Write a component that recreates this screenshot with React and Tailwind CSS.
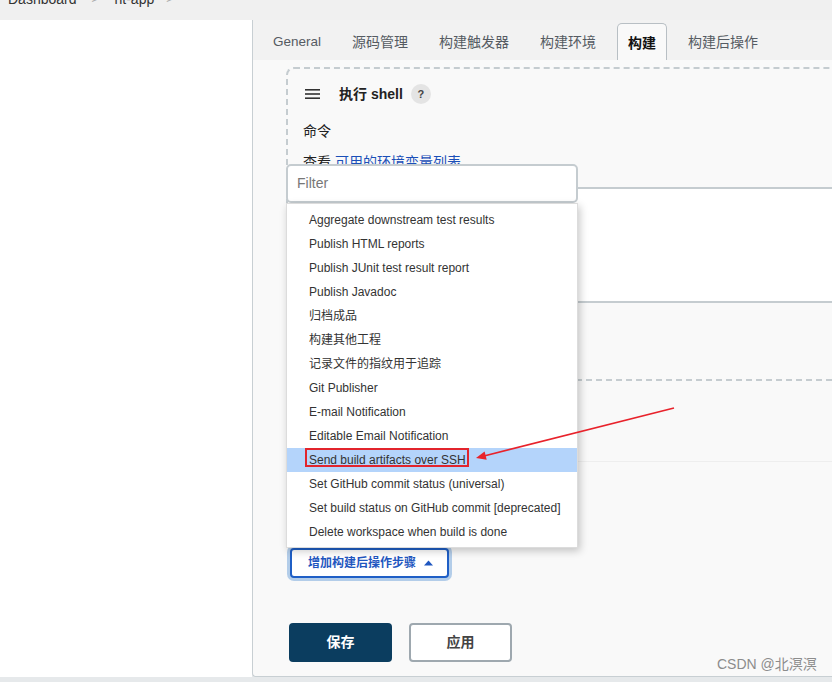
import React from 'react';

const font = "font-['Liberation_Sans','Noto_Sans_CJK_SC',sans-serif]";

const tabs = ['General', '源码管理', '构建触发器', '构建环境', '构建', '构建后操作'];

const items = [
  'Aggregate downstream test results',
  'Publish HTML reports',
  'Publish JUnit test result report',
  'Publish Javadoc',
  '归档成品',
  '构建其他工程',
  '记录文件的指纹用于追踪',
  'Git Publisher',
  'E-mail Notification',
  'Editable Email Notification',
  'Send build artifacts over SSH',
  'Set GitHub commit status (universal)',
  'Set build status on GitHub commit [deprecated]',
  'Delete workspace when build is done',
];

const App = () => {
  return (
    <div className={`relative w-[832px] h-[682px] overflow-hidden bg-[#e6e9eb] ${font}`}>
      {/* breadcrumb */}
      <div className="h-[20px] bg-[#f0f0f0] overflow-hidden">
        <div className="flex items-center h-[20px] -mt-[11px] pl-[8px] text-[14px] text-[#333]">
          <span>Dashboard</span>
          <span className="ml-[15px] text-[#aaa] text-[12px]">&gt;</span>
          <span className="ml-[16px]">rit-app</span>
          <span className="ml-[12px] text-[#aaa] text-[12px]">&gt;</span>
        </div>
      </div>

      <div className="flex">
        <div className="w-[252px] h-[657px] bg-white" />
        <div className="flex-1 h-[657px] bg-[#f9f9f9] border-l border-b border-[#c8cfd3] rounded-bl-[4px] overflow-hidden">
          {/* tabs */}
          <div className="flex items-end h-[40px] bg-[#f2f2f2] pl-[10px] gap-[11px]">
            {tabs.map((t) =>
              t === '构建' ? (
                <div
                  key={t}
                  className="h-[37px] px-[10px] pt-[2px] flex items-center bg-[#f9f9f9] border border-b-0 border-[#b8bfc4] rounded-t-[5px] text-[14px] font-bold text-[#111]"
                >
                  {t}
                </div>
              ) : (
                <div
                  key={t}
                  className={`h-[37px] px-[10px] pt-[2px] flex items-center text-[#555b62] ${
                    t === 'General' ? 'text-[13.5px]' : 'text-[14px]'
                  }`}
                >
                  {t}
                </div>
              )
            )}
          </div>

          {/* build step */}
          <div className="mt-[7px] ml-[33px] -mr-[20px] h-[314px] border-2 border-dashed border-[#c5ccd0] rounded-tl-[8px] pl-[15px]">
            <div className="mt-[15px] h-[20px] flex items-center">
              <svg width="16" height="12" viewBox="0 0 16 12" className="ml-[2px]">
                <rect x="0" y="1" width="15" height="1.6" fill="#333" />
                <rect x="0" y="5.2" width="15" height="1.6" fill="#333" />
                <rect x="0" y="9.4" width="15" height="1.6" fill="#333" />
              </svg>
              <span className="ml-[18px] text-[14px] font-bold text-[#222]">执行 shell</span>
              <span className="ml-[8px] w-[20px] h-[20px] rounded-full bg-[#e4e4e4] flex items-center justify-center text-[11px] font-bold text-[#444]">
                ?
              </span>
            </div>
            <div className="mt-[17px] h-[20px] flex items-center text-[14px] text-[#222]">命令</div>
            <div className="mt-[11px] h-[20px] flex items-center text-[14px] text-[#222]">
              查看 <span className="ml-[4px] text-[#1a4fb8]">可用的环境变量列表</span>
            </div>
            <div className="mt-[15px] h-[116px] bg-white border-2 border-r-0 border-[#c5ccd0] rounded-l-[4px]" />
          </div>

          <div className="mt-[80px] ml-[33px] h-px bg-[#eeeeee]" />

          <div className="mt-[86px] ml-[37px] flex">
            <button className="h-[30px] pl-[16px] pr-[14px] flex items-center gap-[8px] bg-white border-2 border-[#1f5fc6] rounded-[4px] ring-3 ring-[#b3cde9] text-[12px] font-semibold text-[#1f57c0]">
              增加构建后操作步骤
              <svg width="9" height="6" viewBox="0 0 9 6">
                <polygon points="0,5.5 4.5,0.5 9,5.5" fill="#1f57c0" />
              </svg>
            </button>
          </div>

          <div className="mt-[45px] ml-[36px] flex gap-[17px]">
            <button className="w-[103px] h-[39px] rounded-[4px] bg-[#0b3d5f] text-white text-[14px] font-bold">
              保存
            </button>
            <button className="w-[103px] h-[39px] rounded-[4px] bg-white border-2 border-[#9ea8af] text-[#444] text-[14px] font-bold">
              应用
            </button>
          </div>
        </div>
      </div>

      {/* dropdown */}
      <div className="absolute left-[286px] top-[164px] w-[292px]">
        <div className="h-[39px] bg-white border-2 border-[#c5ccd0] rounded-[5px] flex items-center pl-[9px] text-[14px] text-[#777]">
          Filter
        </div>
        <div className="bg-white border border-[#dcdcdc] pt-[4px] pb-[3px] shadow-[2px_3px_8px_rgba(0,0,0,0.22)]">
          {items.map((it, i) => (
            <div
              key={it}
              className={`h-[24px] flex items-center pl-[22px] text-[12px] text-[#333] ${
                i === 10 ? 'bg-[#b4d4fb]' : ''
              }`}
            >
              {it}
            </div>
          ))}
        </div>
      </div>

      {/* annotation */}
      <div className="absolute left-[305px] top-[448px] w-[164px] h-[19px] border-2 border-[#e2242c]" />
      <svg className="absolute inset-0 pointer-events-none" width="832" height="682">
        <line x1="674" y1="408" x2="484" y2="456" stroke="#e8222b" strokeWidth="1.6" />
        <polygon points="476,458 486.7,459.8 484.6,451.5" fill="#e8222b" />
      </svg>

      <div className="absolute left-[717px] top-[654px] text-[14px] text-[#8c8c8c]">CSDN @北溟溟</div>
    </div>
  );
};

export default App;
